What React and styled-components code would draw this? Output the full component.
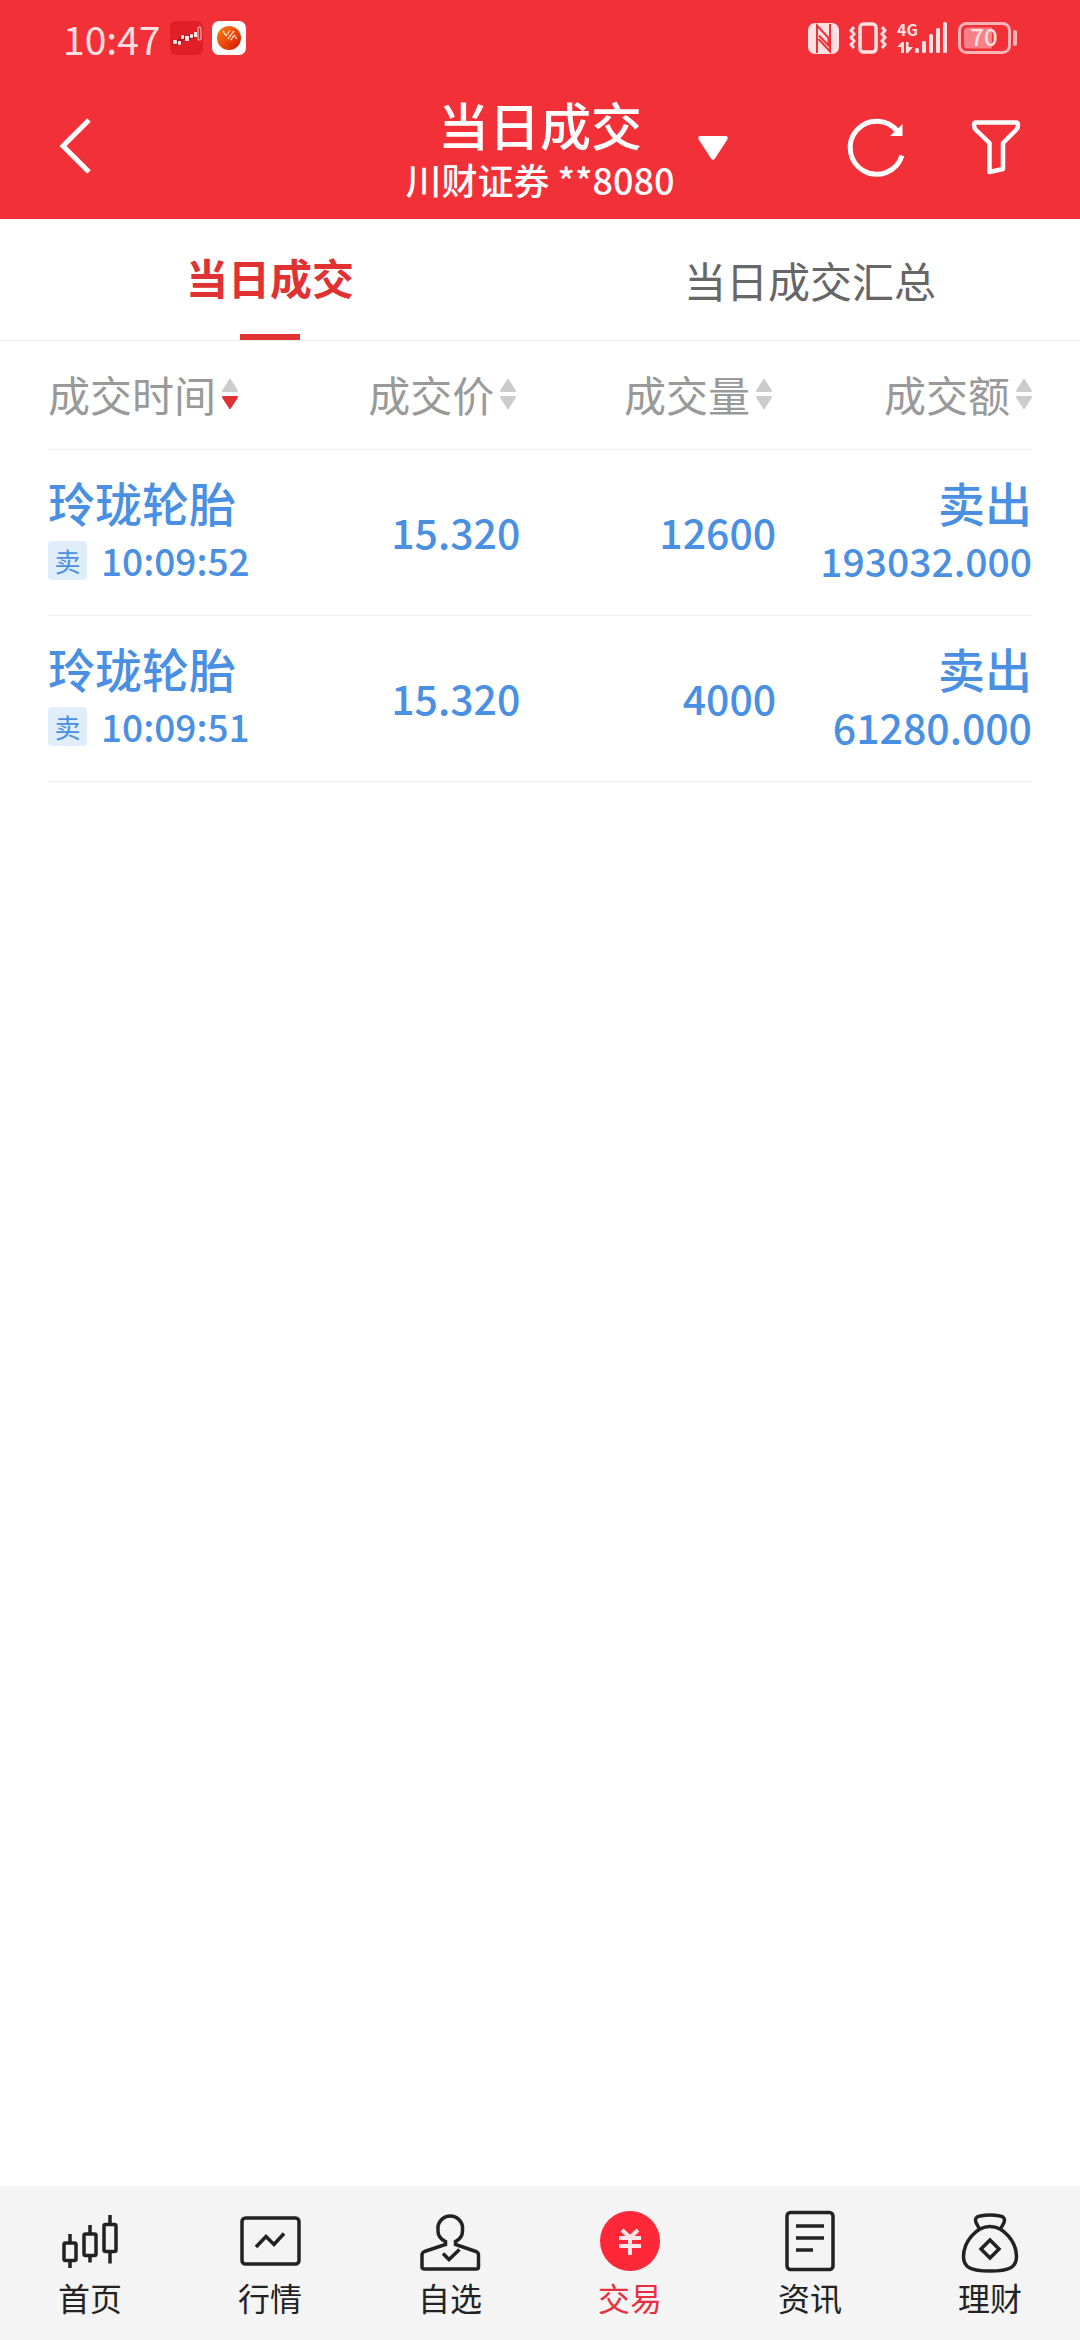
import React, { useState } from "react";
import styled, { createGlobalStyle } from "styled-components";

/* 全局样式 */
const GlobalStyle = createGlobalStyle`
    body {
        margin: 0;
        background: #fff;
        font-family: "Noto Sans CJK SC", sans-serif;
    }

    * {
        box-sizing: border-box;
    }

    button {
        padding: 0;
        border: none;
        background: none;
        color: inherit;
        font: inherit;
        cursor: pointer;
    }

    svg {
        display: block;
        flex: none;
        overflow: visible;
    }
`;

/* 样式 */
const Page = styled.div`
    display: flex;
    flex-direction: column;
    min-height: 100vh;
`;

const Header = styled.header`
    background: #f23038;
    color: #fff;
`;

const StatusBar = styled.div`
    display: flex;
    align-items: center;
    height: 76px;
    padding: 0 62px 0 63px;
    color: #ffe0e1;

    .time {
        margin-right: 10px;
        font-size: 39px;
        line-height: 38px;
    }

    .apps {
        display: flex;
        gap: 9px;
    }

    .system {
        display: flex;
        align-items: center;
        gap: 10px;
        margin-left: auto;
    }
`;

const NavBar = styled.div`
    display: grid;
    grid-template-columns: 1fr auto 1fr;
    align-items: center;
    height: 143px;
    padding: 0 60px;

    .title {
        padding-top: 4px;
        text-align: center;
    }

    .right {
        display: flex;
        align-items: center;
        margin-left: 23px;
    }

    .tools {
        display: flex;
        gap: 66px;
        margin-left: auto;
    }
`;

const Title = styled.h1`
    margin: 0;
    font-size: 51px;
    font-weight: 500;
    line-height: 58px;
`;

const Account = styled.div`
    font-size: 36px;
    font-weight: 500;
    line-height: 52px;
`;

const Tabs = styled.div`
    display: flex;
    height: 122px;
    border-bottom: 1px solid #eee;
`;

const Tab = styled.button`
    display: flex;
    flex: 1;
    flex-direction: column;
    align-items: center;
    font-size: 42px;
    font-weight: ${(p) => (p.$active ? 700 : 400)};
    color: ${(p) => (p.$active ? "#e03232" : "#666")};

    .text {
        display: flex;
        flex: 1;
        align-items: center;
    }

    .line {
        width: 60px;
        height: 6px;
        background: #e03232;
    }
`;

const TableBox = styled.div`
    padding: 0 48px;
`;

const Table = styled.table`
    width: 100%;
    table-layout: fixed;
    border-spacing: 0;
    color: #4a90e2;
    font-weight: 500;

    th,
    td {
        padding: 0 0 3px;
        border-bottom: 1px solid #eee;
        text-align: right;
    }

    th {
        height: 109px;
        padding-right: 4px;
        color: #999;
        font-size: 42px;
        font-weight: 400;
    }

    th:last-child {
        padding-right: 0;
    }

    th:first-child,
    td:first-child {
        text-align: left;
        white-space: nowrap;
    }

    td {
        height: 166px;
    }
`;

const Col = styled.col`
    width: ${(p) => p.$width};
`;

const SortButton = styled.button`
    display: flex;
    align-items: center;
    gap: 6px;
    margin-left: ${(p) => (p.$left ? "0" : "auto")};
    line-height: 58px;
`;

const Name = styled.div`
    font-size: 47px;
    line-height: 58px;
`;

const Detail = styled.div`
    display: flex;
    align-items: center;
    height: 58px;
    gap: 14px;
    font-size: 37px;
`;

const SideTag = styled.span`
    width: 39px;
    height: 39px;
    border-radius: 4px;
    background: #e0edfb;
    font-size: 26px;
    font-weight: 400;
    line-height: 39px;
    text-align: center;
`;

const Num = styled.div`
    font-size: ${(p) => (p.$long ? 39 : 41)}px;
    line-height: 58px;
`;

const TabBar = styled.nav`
    display: flex;
    margin-top: auto;
    height: 154px;
    padding-top: 24px;
    background: #f4f4f4;
`;

const TabBarItem = styled.a`
    display: flex;
    flex: 1;
    flex-direction: column;
    align-items: center;
    gap: 2px;
    color: ${(p) => (p.$active ? "#e8303f" : "#222")};
    font-size: 32px;
    line-height: 46px;
    text-decoration: none;
`;

/* 状态栏图标 */
const ChartAppIcon = () => <svg width="33" height="34" viewBox="0 0 33 34">
    <rect width="33" height="34" rx="6" fill="#e01f26" />
    <path d="M2 21L8 22L13 16L17 18L22 15L27 14L31 6" fill="none" stroke="#b8161e" strokeWidth="5" />
    <g fill="#ffe3e3">
        <rect x="3" y="19" width="4" height="4" rx="1" />
        <rect x="8" y="20" width="3" height="4" rx="1" />
        <rect x="11" y="14" width="3" height="4" rx="1" />
        <rect x="15" y="15" width="4" height="5" />
        <rect x="20" y="13" width="3" height="4" rx="1" />
        <rect x="24" y="11" width="3" height="5" />
    </g>
    <rect x="28" y="6" width="3" height="13" rx="1" fill="#e01f26" stroke="#ffd0c8" />
</svg>;

const BrokerAppIcon = () => <svg width="34" height="34" viewBox="0 0 34 34">
    <defs>
        <linearGradient id="broker" x1="0" y1="0" x2="1" y2="1">
            <stop offset="0" stopColor="#e88a1c" />
            <stop offset="0.5" stopColor="#f04a0c" />
            <stop offset="1" stopColor="#c81408" />
        </linearGradient>
    </defs>
    <rect width="34" height="34" rx="7" fill="#fff" />
    <circle cx="17" cy="17" r="12" fill="url(#broker)" />
    <path d="M11 10L13.500 14M14 15L18 9.500M16 18L22 10M19 19L21.500 15M22 14L25 18" fill="none" stroke="#ffe9d0" strokeWidth="1.500" strokeDasharray="2 0.600" />
</svg>;

const NfcIcon = () => <svg width="31" height="31" viewBox="0 0 31 31">
    <rect width="31" height="31" rx="7" fill="currentColor" />
    <path d="M9 30V2.500L20.500 15V22.500L11 12.500M22 1V28.500L10.500 16" fill="none" stroke="#f23038" strokeWidth="2" />
</svg>;

const VibrateIcon = () => <svg width="38" height="32" viewBox="0 0 38 32" fill="none" stroke="currentColor">
    <rect x="11" y="2" width="16" height="28" rx="3.500" strokeWidth="3.500" />
    <path d="M5 5L2 8.500L5 12L2 15.500L5 19L2 22.500L5 26M33 5L36 8.500L33 12L36 15.500L33 19L36 22.500L33 26" strokeWidth="3" />
</svg>;

const SignalIcon = () => <svg width="51" height="32" viewBox="0 0 51 32" fill="currentColor">
    <text x="0" y="14" fontSize="16" fontWeight="700">4G</text>
    <path d="M0 25L5 20H7V31H4V25ZM9 20H11.500V25H16L11 31H9Z" />
    <rect x="18" y="26" width="4" height="5" rx="1.500" />
    <rect x="25" y="19" width="4" height="12" rx="1.500" />
    <rect x="32" y="12" width="4" height="19" rx="1.500" />
    <rect x="39" y="6" width="4" height="25" rx="1.500" />
    <rect x="46" y="0" width="4" height="31" rx="1.500" />
</svg>;

const BatteryIcon = () => <svg width="60" height="32" viewBox="0 0 60 32">
    <rect x="1.500" y="1.500" width="50" height="29" rx="7" fill="none" stroke="#ffb3b6" strokeWidth="3" />
    <path d="M10 5.500H34V26.500H10A4 4 0 0 1 6 22.500V9.500A4 4 0 0 1 10 5.500Z" fill="#f98087" />
    <text x="26" y="24" fontSize="24" fontWeight="500" textAnchor="middle" fill="currentColor">70</text>
    <rect x="55" y="8" width="4" height="16" rx="2" fill="#ffb3b6" />
</svg>;

/* 导航栏图标 */
const BackIcon = () => <svg width="32" height="58" viewBox="0 0 32 58" fill="none" stroke="currentColor" strokeWidth="5">
    <path d="M29 4L3 30L29 56" />
</svg>;

const CaretIcon = () => <svg width="30" height="24" viewBox="0 0 30 24" fill="currentColor">
    <path d="M2.500 0H27.500Q31 0 29 4L17 22.500Q15 25 13 22.500L1 4Q-1 0 2.500 0Z" />
</svg>;

const RefreshIcon = () => <svg width="58" height="58" viewBox="0 0 58 58">
    <path d="M54 36.500A26.500 26.500 0 1 1 50 13" fill="none" stroke="currentColor" strokeWidth="5" />
    <path d="M54.500 5V17H42Z" fill="currentColor" />
</svg>;

const FilterIcon = () => <svg width="48" height="56" viewBox="0 0 48 56" fill="none" stroke="currentColor" strokeWidth="4.500" strokeLinejoin="round">
    <path d="M4 2.500H44Q46 2.500 46 5Q46 8 44 10L31 23V49L17.500 52V23L4 10Q2 8 2 5Q2 2.500 4 2.500Z" />
</svg>;

/* 排序图标 */
const SortIcon = ({ order }) => <svg width="16" height="32" viewBox="0 0 16 32" strokeLinejoin="round">
    <path d="M8 1L15.500 12.500Q16 13.500 15 13.500H1Q0 13.500 0.500 12.500Z" fill={order === "asc" ? "#e03232" : "#ccc"} stroke={order === "asc" ? "#e03232" : "#ccc"} />
    <path d="M8 31L15.500 19.500Q16 18.500 15 18.500H1Q0 18.500 0.500 19.500Z" fill={order === "desc" ? "#e03232" : "#ccc"} stroke={order === "desc" ? "#e03232" : "#ccc"} />
</svg>;

/* 底部图标 */
const TabIcon = ({ children }) => <svg width="62" height="62" viewBox="0 0 62 62" fill="none" stroke="currentColor" strokeWidth="3.500">
    {children}
</svg>;

const icons = {
    home: <TabIcon>
        <rect x="5" y="33" width="12" height="17.500" rx="1.500" />
        <rect x="25" y="24" width="12" height="21.500" rx="1.500" />
        <rect x="45" y="14.500" width="12" height="27" rx="1.500" />
        <path d="M11 24V32.500M11 50.500V58M31 15V23.500M31 45.500V52.500M51 5V14.500M51 41.500V53.500" />
    </TabIcon>,
    market: <TabIcon>
        <rect x="3" y="8" width="57" height="46" rx="3.500" />
        <path d="M17 37L27 26.500L35 34.500L45 23.500" />
    </TabIcon>,
    optional: <TabIcon>
        <path d="M26.500 34.500V31.500Q19 28 19 21V16A12.500 12.500 0 0 1 43.500 16V21Q43.500 28 36.500 31.500V34.500L57 41.500Q59.500 42.500 59.500 45V57Q59.500 59 57 59H6Q3 59 3 57V45Q3 42.500 5.500 41.500Z" />
        <path d="M24 43.500L30 49.500L40.500 39.500" />
    </TabIcon>,
    trade: <svg width="62" height="62" viewBox="0 0 62 62">
        <circle cx="31" cy="31" r="30" fill="#ff2838" />
        <path d="M23 20L31 27.500L39 20M20 28H42M20 36H42M31 27V45" fill="none" stroke="#ffe6e8" strokeWidth="4" />
    </svg>,
    news: <TabIcon>
        <rect x="8" y="2.500" width="46" height="57" rx="3.500" />
        <path d="M17 16H45M17 28H45M17 40H34" />
    </TabIcon>,
    finance: <TabIcon>
        <path d="M21 20L17 12.500Q15 7 21 6Q31 4 41 6Q47 7 45 12.500L41 20" />
        <path d="M31 16.500C45 16.500 57.500 32 57.500 46.500C57.500 57 51 61 31 61C11 61 4.500 57 4.500 46.500C4.500 32 17 16.500 31 16.500Z" />
        <path d="M31 30L40 39L31 48L22 39Z" />
    </TabIcon>,
};

const tabs = ["当日成交", "当日成交汇总"];

const columns = [
    { label: "成交时间", width: "22%", order: "desc" },
    { label: "成交价", width: "26%" },
    { label: "成交量", width: "26%" },
    { label: "成交额", width: "26%" },
];

const deals = [
    { name: "玲珑轮胎", time: "10:09:52", price: "15.320", count: "12600", amount: "193032.000" },
    { name: "玲珑轮胎", time: "10:09:51", price: "15.320", count: "4000", amount: "61280.000" },
];

const menus = [
    { key: "home", label: "首页" },
    { key: "market", label: "行情" },
    { key: "optional", label: "自选" },
    { key: "trade", label: "交易" },
    { key: "news", label: "资讯" },
    { key: "finance", label: "理财" },
];

const App = function App() {

    /* 定义状态 */
    const [active, setActive] = useState(0);

    return <Page>
        <GlobalStyle />
        <Header>
            <StatusBar>
                <span className="time">10:47</span>
                <div className="apps">
                    <ChartAppIcon />
                    <BrokerAppIcon />
                </div>
                <div className="system">
                    <NfcIcon />
                    <VibrateIcon />
                    <SignalIcon />
                    <BatteryIcon />
                </div>
            </StatusBar>
            <NavBar>
                <div>
                    <button aria-label="返回"><BackIcon /></button>
                </div>
                <div className="title">
                    <Title>当日成交</Title>
                    <Account>川财证券 **8080</Account>
                </div>
                <div className="right">
                    <button aria-label="切换账户"><CaretIcon /></button>
                    <div className="tools">
                        <button aria-label="刷新"><RefreshIcon /></button>
                        <button aria-label="筛选"><FilterIcon /></button>
                    </div>
                </div>
            </NavBar>
        </Header>
        <Tabs>
            {tabs.map((item, index) => (
                <Tab key={item} $active={index === active} onClick={() => setActive(index)}>
                    <span className="text">{item}</span>
                    {index === active && <span className="line" />}
                </Tab>
            ))}
        </Tabs>
        <TableBox>
            <Table>
                <colgroup>
                    {columns.map((item) => <Col key={item.label} $width={item.width} />)}
                </colgroup>
                <thead>
                    <tr>
                        {columns.map((item, index) => (
                            <th key={item.label}>
                                <SortButton $left={index === 0}>
                                    {item.label}
                                    <SortIcon order={item.order} />
                                </SortButton>
                            </th>
                        ))}
                    </tr>
                </thead>
                <tbody>
                    {deals.map((item) => (
                        <tr key={item.time}>
                            <td>
                                <Name>{item.name}</Name>
                                <Detail>
                                    <SideTag>卖</SideTag>
                                    {item.time}
                                </Detail>
                            </td>
                            <td><Num>{item.price}</Num></td>
                            <td><Num>{item.count}</Num></td>
                            <td>
                                <Name>卖出</Name>
                                <Num $long={item.amount.length > 9}>{item.amount}</Num>
                            </td>
                        </tr>
                    ))}
                </tbody>
            </Table>
        </TableBox>
        <TabBar>
            {menus.map((item) => (
                <TabBarItem key={item.key} href={`#${item.key}`} $active={item.key === "trade"}>
                    {icons[item.key]}
                    {item.label}
                </TabBarItem>
            ))}
        </TabBar>
    </Page>;
};
export default App
